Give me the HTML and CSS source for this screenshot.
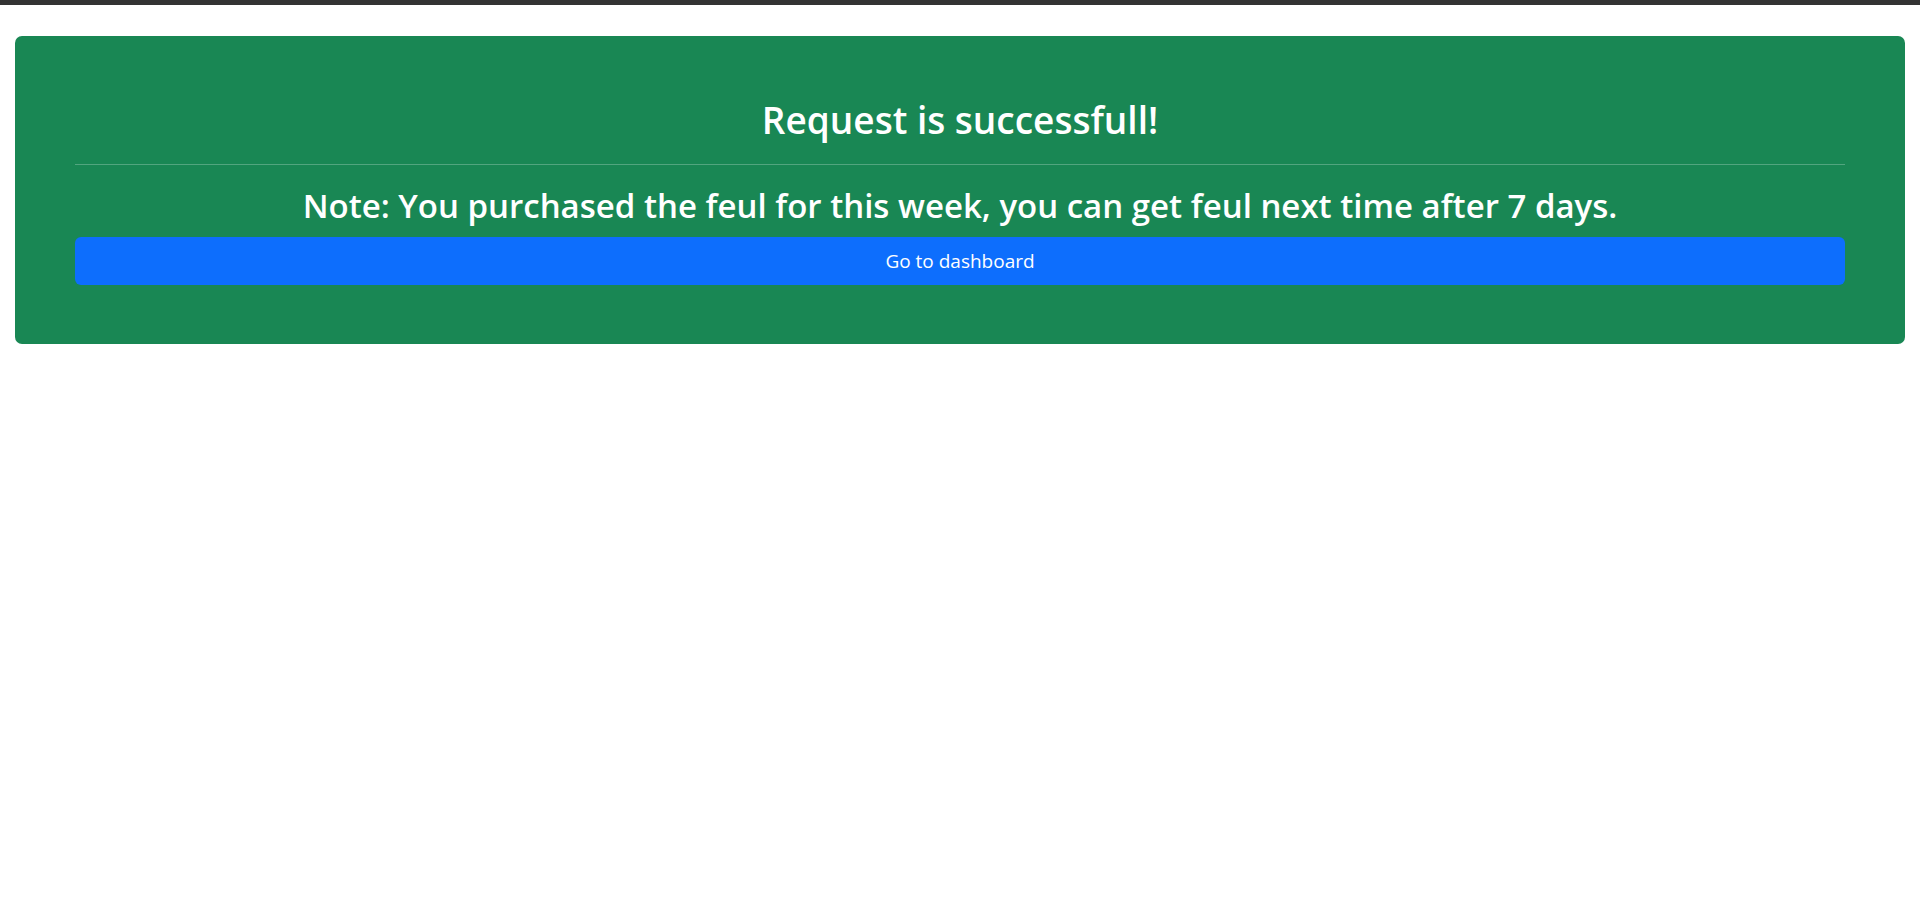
FILE: index.html
```html
<!DOCTYPE html>
<html lang="en">
<head>
<meta charset="utf-8">
<title>Request is successfull!</title>
<link rel="stylesheet" href="styles.css">
</head>
<body>
<div class="topbar"></div>
<main class="page">
  <section class="card">
    <h2 class="title">Request is successfull!</h2>
    <hr class="divider">
    <h3 class="note">Note: You purchased the feul for this week, you can get feul next time after 7 days.</h3>
    <a class="btn" href="#">Go to dashboard</a>
  </section>
</main>
</body>
</html>
```
FILE: styles.css
```css
* { box-sizing: border-box; }
html, body { margin: 0; padding: 0; background: #fff; }
body { font-family: "Open Sans", "Noto Sans", "Liberation Sans", sans-serif; }
.topbar { height: 5px; background: #333333; }
.page { padding: 31px 15px 0 15px; }
.card {
  background: #198754;
  border-radius: 7px;
  padding: 60px 60px 59px 60px;
  color: #fff;
  display: flex;
  flex-direction: column;
}
.title, .note {
  margin: 0;
  font-weight: 600;
  text-align: center;
}
.title {
  font-size: 37px;
  line-height: 48px;
}
.note {
  font-size: 33px;
  line-height: 42px;
}
.divider {
  margin: 20px 0 20px 0;
  border: 0;
  border-top: 1px solid rgba(255,255,255,0.25);
  height: 0;
}
.btn {
  margin-top: 10px;
  display: block;
  height: 48px;
  line-height: 48px;
  background: #0d6efd;
  border-radius: 6px;
  color: #fff;
  text-decoration: none;
  text-align: center;
  font-size: 19px;
  font-weight: 400;
}
```
